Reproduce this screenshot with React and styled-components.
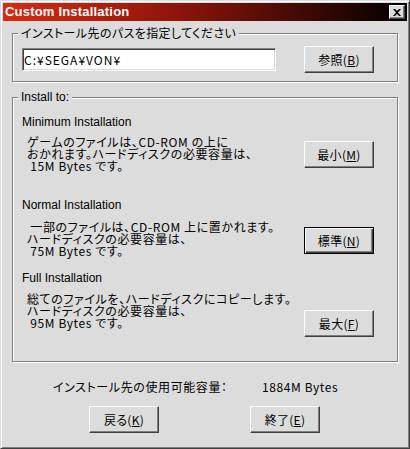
import React from 'react';
import styled, { createGlobalStyle } from 'styled-components';

const FACE = '#dcdcdc';
const JP = `"Noto Sans CJK JP", "Liberation Sans", sans-serif`;
const LATIN = `"Liberation Sans", "Noto Sans CJK JP", sans-serif`;

const GlobalStyle = createGlobalStyle`
    body {
        margin: 0;
        background: ${FACE};
    }
`;

const Window = styled.div`
    box-sizing: border-box;
    width: 410px;
    height: 449px;
    display: flex;
    flex-direction: column;
    padding: 2px;
    background: ${FACE};
    border: 1px solid;
    border-color: ${FACE} #404040 #404040 ${FACE};
    box-shadow: inset 1px 1px #fff, inset -1px -1px #808080;
    color: #000;
    font-family: ${JP};
    font-size: 12px;
    line-height: 12px;
    font-feature-settings: "palt";
    letter-spacing: 0.6px;
`;

const TitleBar = styled.div`
    height: 18px;
    flex: none;
    display: flex;
    align-items: center;
    justify-content: space-between;
    padding: 0 2px;
    background: linear-gradient(90deg, #d82b14 0%, #8a140a 45%, #000 100%);
`;

const Title = styled.span`
    color: #fff;
    font-family: ${LATIN};
    font-weight: bold;
    font-size: 13px;
    letter-spacing: 0.2px;
`;

const CloseButton = styled.div`
    box-sizing: border-box;
    width: 16px;
    height: 14px;
    display: flex;
    align-items: center;
    justify-content: center;
    background: ${FACE};
    border: 1px solid;
    border-color: #fff #404040 #404040 #fff;
    box-shadow: inset -1px -1px #808080;
`;

const Body = styled.div`
    display: flex;
    flex-direction: column;
    padding: 0 9px;
`;

/* etched group frame with its caption sitting on the top line */
const Group = styled.div`
    display: flex;
    flex-direction: column;
    margin-top: ${p => p.$top}px;
    padding: 0 23px ${p => p.$bottom}px 9px;
    border: 1px solid #808080;
    box-shadow: inset 1px 1px #fff, 1px 1px #fff;
`;

const Legend = styled.div`
    align-self: flex-start;
    margin: -7px 0 0 -4px;
    padding: 0 3px;
    background: ${FACE};
    line-height: 12px;
    font-family: ${p => (p.$latin ? LATIN : JP)};
    letter-spacing: ${p => (p.$latin ? 0 : 0.4)}px;
`;

const PathRow = styled.div`
    display: flex;
    align-items: center;
    margin-top: 7px;
`;

const TextField = styled.div`
    box-sizing: border-box;
    width: 254px;
    height: 23px;
    display: flex;
    align-items: center;
    padding-left: 1px;
    background: #fff;
    border: 1px solid;
    border-color: #808080 #fff #fff #808080;
    box-shadow: inset 1px 1px #404040, inset -1px -1px ${FACE};
    letter-spacing: 1px;
`;

const Button = styled.div`
    box-sizing: border-box;
    flex: none;
    width: 70px;
    height: 27px;
    display: flex;
    align-items: center;
    justify-content: center;
    margin-top: ${p => p.$top || 0}px;
    margin-left: ${p => (p.$left === undefined ? 'auto' : `${p.$left}px`)};
    background: ${FACE};
    border: 1px solid;
    border-color: ${p => (p.$default ? '#000' : '#fff #404040 #404040 #fff')};
    box-shadow: ${p => (p.$default
        ? 'inset 1px 1px #fff, inset -1px -1px #404040, inset -2px -2px #808080'
        : 'inset -1px -1px #808080')};
    letter-spacing: 0.3px;

    u {
        text-underline-offset: 1px;
    }
`;

const SectionTitle = styled.div`
    margin-top: ${p => p.$top}px;
    font-family: ${LATIN};
    letter-spacing: 0;
    line-height: 12px;
`;

const OptionRow = styled.div`
    display: flex;
    align-items: flex-start;
    margin-top: ${p => p.$top}px;
`;

const Desc = styled.div`
    flex: none;
    margin-left: 5px;
    white-space: pre;
    line-height: 12px;
`;

const InfoRow = styled.div`
    display: flex;
    margin: 19px 0 0 41px;
`;

const InfoLabel = styled.span`
    width: 209px;
`;

const FooterRow = styled.div`
    display: flex;
    margin: 13px 0 0 77px;
    gap: 91px;
`;

const options = [
    {
        title: 'Minimum Installation',
        top: 13,
        rowTop: 8,
        btnTop: 5,
        lines: ['ゲームのファイルは、CD-ROM の上に', 'おかれます。ハードディスクの必要容量は、', ' 15M Bytes です。'],
        label: '最小',
        key: 'M',
    },
    {
        title: 'Normal Installation',
        top: 27,
        rowTop: 10,
        btnTop: 6,
        lines: [' 一部のファイルは、CD-ROM 上に置かれます。', 'ハードディスクの必要容量は、', ' 75M Bytes です。'],
        label: '標準',
        key: 'N',
        isDefault: true,
    },
    {
        title: 'Full Installation',
        top: 15,
        rowTop: 9,
        btnTop: 17,
        lines: ['総てのファイルを、ハードディスクにコピーします。', 'ハードディスクの必要容量は、', ' 95M Bytes です。'],
        label: '最大',
        key: 'F',
    },
];

function Mnemonic({ label, k }) {
    return (
        <span>
            {label}(<u>{k}</u>)
        </span>
    );
}

function App() {
    return (
        <>
            <GlobalStyle />
            <Window>
                <TitleBar>
                    <Title>Custom Installation</Title>
                    <CloseButton>
                        <svg width="8" height="7" viewBox="0 0 8 7">
                            <path d="M0 0h2l2 2 2-2h2L5 3.5 8 7H6L4 5 2 7H0l3-3.5z" fill="#000" />
                        </svg>
                    </CloseButton>
                </TitleBar>
                <Body>
                    <Group $top={12} $bottom={8}>
                        <Legend>インストール先のパスを指定してください</Legend>
                        <PathRow>
                            <TextField>C:¥SEGA¥VON¥</TextField>
                            <Button>
                                <Mnemonic label="参照" k="B" />
                            </Button>
                        </PathRow>
                    </Group>
                    <Group $top={15} $bottom={24}>
                        <Legend $latin>Install to:</Legend>
                        {options.map(opt => (
                            <React.Fragment key={opt.key}>
                                <SectionTitle $top={opt.top}>{opt.title}</SectionTitle>
                                <OptionRow $top={opt.rowTop}>
                                    <Desc>{opt.lines.join('\n')}</Desc>
                                    <Button $top={opt.btnTop} $default={opt.isDefault}>
                                        <Mnemonic label={opt.label} k={opt.key} />
                                    </Button>
                                </OptionRow>
                            </React.Fragment>
                        ))}
                    </Group>
                    <InfoRow>
                        <InfoLabel>インストール先の使用可能容量：</InfoLabel>
                        <span>1884M Bytes</span>
                    </InfoRow>
                    <FooterRow>
                        <Button $left={0}>
                            <Mnemonic label="戻る" k="K" />
                        </Button>
                        <Button $left={0}>
                            <Mnemonic label="終了" k="E" />
                        </Button>
                    </FooterRow>
                </Body>
            </Window>
        </>
    );
}

export default App;
